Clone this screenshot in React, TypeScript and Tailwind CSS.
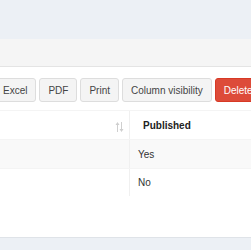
import React from "react";

function SortIcon() {
  return (
    <svg width="9" height="10" viewBox="0 0 9 10" className="block">
      <path d="M2.5 0 L4.5 3 L3 3 L3 10 L2 10 L2 3 L0.5 3 Z" fill="#cfcfcf" />
      <path d="M6.5 10 L8.5 7 L7 7 L7 0 L6 0 L6 7 L4.5 7 Z" fill="#cfcfcf" />
    </svg>
  );
}

export default function App() {
  const btn =
    "h-[24px] px-[8px] flex items-center bg-[#f4f4f4] border border-[#dddddd] rounded-[3px] text-[#444] text-[10px] shrink-0";
  return (
    <div
      className="w-[251px] h-[250px] overflow-hidden bg-[#ecf0f5] flex flex-col"
      style={{ fontFamily: '"Liberation Sans", Arial, sans-serif' }}
    >
      <div className="h-[39px] shrink-0" />
      <div className="h-[199px] shrink-0 bg-white flex flex-col border-b border-[#dfe3e8]">
        <div className="h-[28px] shrink-0 bg-[#f5f5f5] border-b border-[#e4e4e4]" />
        <div className="flex gap-[3px] ml-[-6px] mt-[11px]">
          <div className={btn}>Excel</div>
          <div className={btn}>PDF</div>
          <div className={btn}>Print</div>
          <div className={btn}>Column visibility</div>
          <div className="h-[24px] px-[8px] flex items-center bg-[#dd4b39] border border-[#d73925] rounded-[3px] text-white text-[10px] shrink-0">
            Delete
          </div>
        </div>
        <div className="mt-[8px] border-t border-[#f4f4f4] text-[10px] text-[#333]">
          <div className="flex h-[28px]">
            <div className="w-[130px] shrink-0 border-r border-[#f0f0f0] flex items-center justify-end pr-[5px] pt-[4px]">
              <SortIcon />
            </div>
            <div className="flex-1 flex items-center pl-[13px] font-bold text-[#222]">
              Published
            </div>
          </div>
          <div className="flex h-[29px] bg-[#f9f9f9] border-t border-[#f4f4f4]">
            <div className="w-[130px] shrink-0 border-r border-[#f0f0f0]" />
            <div className="flex-1 flex items-center pl-[8px]">Yes</div>
          </div>
          <div className="flex h-[28px] border-t border-[#f4f4f4]">
            <div className="w-[130px] shrink-0 border-r border-[#f0f0f0]" />
            <div className="flex-1 flex items-center pl-[8px]">No</div>
          </div>
        </div>
      </div>
    </div>
  );
}
